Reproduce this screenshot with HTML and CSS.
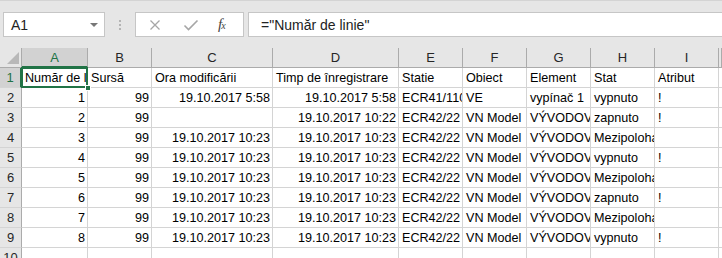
FILE: index.html
```html
<!DOCTYPE html>
<html lang="ro">
<head>
    <meta charset="UTF-8">
    <title>Sheet1</title>
    <link rel="stylesheet" href="styles.css">
</head>
<body>
    <!-- Formula bar -->
    <div class="formula-bar">
        <div class="name-box">
            <span>A1</span>
            <span class="name-arrow"></span>
        </div>
        <div class="grip">
            <i></i><i></i><i></i>
        </div>
        <div class="fx-buttons">
            <svg class="fx-icon" viewBox="0 0 12 12" width="12" height="12">
                <path d="M1.5 1.5l9 9M10.5 1.5l-9 9" stroke="#a6a6a6" stroke-width="1.3" fill="none"/>
            </svg>
            <svg class="fx-icon" viewBox="0 0 16 12" width="16" height="12">
                <path d="M1.5 6.5l4 4 9-9" stroke="#a6a6a6" stroke-width="1.6" fill="none"/>
            </svg>
            <span class="fx-label">f<sub>x</sub></span>
        </div>
        <div class="formula-input">="Număr de linie"</div>
    </div>

    <!-- Grid -->
    <div class="sheet">
        <div class="corner"><span class="corner-tri"></span></div>
        <div class="col-head active">A</div>
        <div class="col-head">B</div>
        <div class="col-head">C</div>
        <div class="col-head">D</div>
        <div class="col-head">E</div>
        <div class="col-head">F</div>
        <div class="col-head">G</div>
        <div class="col-head">H</div>
        <div class="col-head">I</div>
        <div class="col-head"></div>

        <div class="row-head active">1</div>
        <div class="cell selected"><span class="cell-text">Număr de linie</span><span class="handle"></span></div>
        <div class="cell">Sursă</div>
        <div class="cell">Ora modificării</div>
        <div class="cell">Timp de înregistrare</div>
        <div class="cell">Statie</div>
        <div class="cell">Obiect</div>
        <div class="cell">Element</div>
        <div class="cell">Stat</div>
        <div class="cell">Atribut</div>
        <div class="cell"></div>

        <div class="row-head">2</div>
        <div class="cell num">1</div>
        <div class="cell num">99</div>
        <div class="cell num">19.10.2017 5:58</div>
        <div class="cell num">19.10.2017 5:58</div>
        <div class="cell">ECR41/110kV</div>
        <div class="cell">VE</div>
        <div class="cell">vypínač 1</div>
        <div class="cell">vypnuto</div>
        <div class="cell">!</div>
        <div class="cell"></div>

        <div class="row-head">3</div>
        <div class="cell num">2</div>
        <div class="cell num">99</div>
        <div class="cell num"></div>
        <div class="cell num">19.10.2017 10:22</div>
        <div class="cell">ECR42/22</div>
        <div class="cell">VN Model</div>
        <div class="cell">VÝVODOVÉ</div>
        <div class="cell">zapnuto</div>
        <div class="cell">!</div>
        <div class="cell"></div>

        <div class="row-head">4</div>
        <div class="cell num">3</div>
        <div class="cell num">99</div>
        <div class="cell num">19.10.2017 10:23</div>
        <div class="cell num">19.10.2017 10:23</div>
        <div class="cell">ECR42/22</div>
        <div class="cell">VN Model</div>
        <div class="cell">VÝVODOVÉ</div>
        <div class="cell">Mezipoloha</div>
        <div class="cell"></div>
        <div class="cell"></div>

        <div class="row-head">5</div>
        <div class="cell num">4</div>
        <div class="cell num">99</div>
        <div class="cell num">19.10.2017 10:23</div>
        <div class="cell num">19.10.2017 10:23</div>
        <div class="cell">ECR42/22</div>
        <div class="cell">VN Model</div>
        <div class="cell">VÝVODOVÉ</div>
        <div class="cell">vypnuto</div>
        <div class="cell">!</div>
        <div class="cell"></div>

        <div class="row-head">6</div>
        <div class="cell num">5</div>
        <div class="cell num">99</div>
        <div class="cell num">19.10.2017 10:23</div>
        <div class="cell num">19.10.2017 10:23</div>
        <div class="cell">ECR42/22</div>
        <div class="cell">VN Model</div>
        <div class="cell">VÝVODOVÉ</div>
        <div class="cell">Mezipoloha</div>
        <div class="cell"></div>
        <div class="cell"></div>

        <div class="row-head">7</div>
        <div class="cell num">6</div>
        <div class="cell num">99</div>
        <div class="cell num">19.10.2017 10:23</div>
        <div class="cell num">19.10.2017 10:23</div>
        <div class="cell">ECR42/22</div>
        <div class="cell">VN Model</div>
        <div class="cell">VÝVODOVÉ</div>
        <div class="cell">zapnuto</div>
        <div class="cell">!</div>
        <div class="cell"></div>

        <div class="row-head">8</div>
        <div class="cell num">7</div>
        <div class="cell num">99</div>
        <div class="cell num">19.10.2017 10:23</div>
        <div class="cell num">19.10.2017 10:23</div>
        <div class="cell">ECR42/22</div>
        <div class="cell">VN Model</div>
        <div class="cell">VÝVODOVÉ</div>
        <div class="cell">Mezipoloha</div>
        <div class="cell"></div>
        <div class="cell"></div>

        <div class="row-head">9</div>
        <div class="cell num">8</div>
        <div class="cell num">99</div>
        <div class="cell num">19.10.2017 10:23</div>
        <div class="cell num">19.10.2017 10:23</div>
        <div class="cell">ECR42/22</div>
        <div class="cell">VN Model</div>
        <div class="cell">VÝVODOVÉ</div>
        <div class="cell">vypnuto</div>
        <div class="cell">!</div>
        <div class="cell"></div>

        <div class="row-head">10</div>
        <div class="cell"></div>
        <div class="cell"></div>
        <div class="cell"></div>
        <div class="cell"></div>
        <div class="cell"></div>
        <div class="cell"></div>
        <div class="cell"></div>
        <div class="cell"></div>
        <div class="cell"></div>
        <div class="cell"></div>
    </div>
</body>
</html>
```

FILE: styles.css
```css
* {
    margin: 0;
    padding: 0;
    box-sizing: border-box;
}

body {
    font-family: "Liberation Sans", Arial, sans-serif;
    background: #e6e6e6;
    color: #000;
    width: 722px;
    height: 258px;
    overflow: hidden;
    border-top: 1px solid #d4d4d4;
}

/* Formula bar */

.formula-bar {
    display: flex;
    align-items: stretch;
    height: 25px;
    margin-top: 11px;
    margin-bottom: 11px;
    padding-left: 3px;
}

.name-box {
    width: 102px;
    background: #fff;
    border: 1px solid #c6c6c6;
    display: flex;
    align-items: center;
    justify-content: space-between;
    padding: 0 6px 0 7px;
    font-size: 14px;
    color: #222;
}

.name-arrow {
    width: 0;
    height: 0;
    border-left: 4px solid transparent;
    border-right: 4px solid transparent;
    border-top: 4px solid #777;
}

.grip {
    width: 30px;
    display: flex;
    flex-direction: column;
    align-items: center;
    justify-content: center;
    gap: 2px;
}

.grip i {
    display: block;
    width: 2px;
    height: 2px;
    background: #b4b4b4;
}

.fx-buttons {
    width: 109px;
    background: #fff;
    border: 1px solid #c6c6c6;
    display: flex;
    align-items: center;
    padding-left: 13px;
}

.fx-icon {
    display: block;
}

.fx-icon + .fx-icon {
    margin-left: 22px;
}

.fx-label {
    margin-left: 19px;
    font-family: "Liberation Serif", serif;
    font-style: italic;
    font-size: 15px;
    color: #444;
    line-height: 1;
}

.fx-label sub {
    font-size: 10px;
    vertical-align: baseline;
    margin-left: -1px;
}

.formula-input {
    flex: 1;
    margin-left: 4px;
    margin-right: -4px;
    background: #fff;
    border: 1px solid #c6c6c6;
    font-size: 14px;
    color: #222;
    display: flex;
    align-items: center;
    padding-left: 12px;
}

/* Grid */

.sheet {
    display: grid;
    grid-template-columns: 22px 66px 64px 121px 126px 64px 64px 64px 64px 64px 3px;
    grid-auto-rows: 20px;
    background: #fff;
}

.corner {
    background: #e6e6e6;
    border-right: 1px solid #ababab;
    border-bottom: 1px solid #ababab;
    display: flex;
    align-items: flex-end;
    justify-content: flex-end;
    padding: 0 2px 3px 0;
}

.corner-tri {
    width: 0;
    height: 0;
    border-left: 12px solid transparent;
    border-bottom: 12px solid #b8b8b8;
}

.col-head {
    background: #e6e6e6;
    border-right: 1px solid #ababab;
    border-bottom: 1px solid #ababab;
    text-align: center;
    font-size: 13px;
    line-height: 19px;
    color: #262626;
}

.col-head.active {
    background: #d2d2d2;
    border-bottom: 2px solid #217346;
    color: #217346;
}

.row-head {
    background: #e6e6e6;
    border-right: 1px solid #ababab;
    border-bottom: 1px solid #d4d4d4;
    text-align: center;
    font-size: 13px;
    line-height: 19px;
    color: #262626;
}

.row-head.active {
    background: #d2d2d2;
    border-right: 2px solid #217346;
    color: #217346;
}

.cell {
    position: relative;
    border-right: 1px solid #d4d4d4;
    border-bottom: 1px solid #d4d4d4;
    font-size: 12.6px;
    line-height: 20px;
    padding: 0 2px 0 3px;
    white-space: nowrap;
    overflow: hidden;
}

.cell.num {
    text-align: right;
}

.cell.selected {
    overflow: visible;
    z-index: 1;
    padding: 0;
}

.cell-text {
    display: block;
    overflow: hidden;
    white-space: nowrap;
    padding: 0 2px 0 3px;
}

.cell.selected::before {
    content: "";
    position: absolute;
    left: -1px;
    top: -1px;
    right: -1px;
    bottom: -1px;
    border: 2px solid #217346;
    pointer-events: none;
}

.handle {
    position: absolute;
    right: -4px;
    bottom: -4px;
    width: 6px;
    height: 6px;
    background: #217346;
    border: 1px solid #fff;
}
```
